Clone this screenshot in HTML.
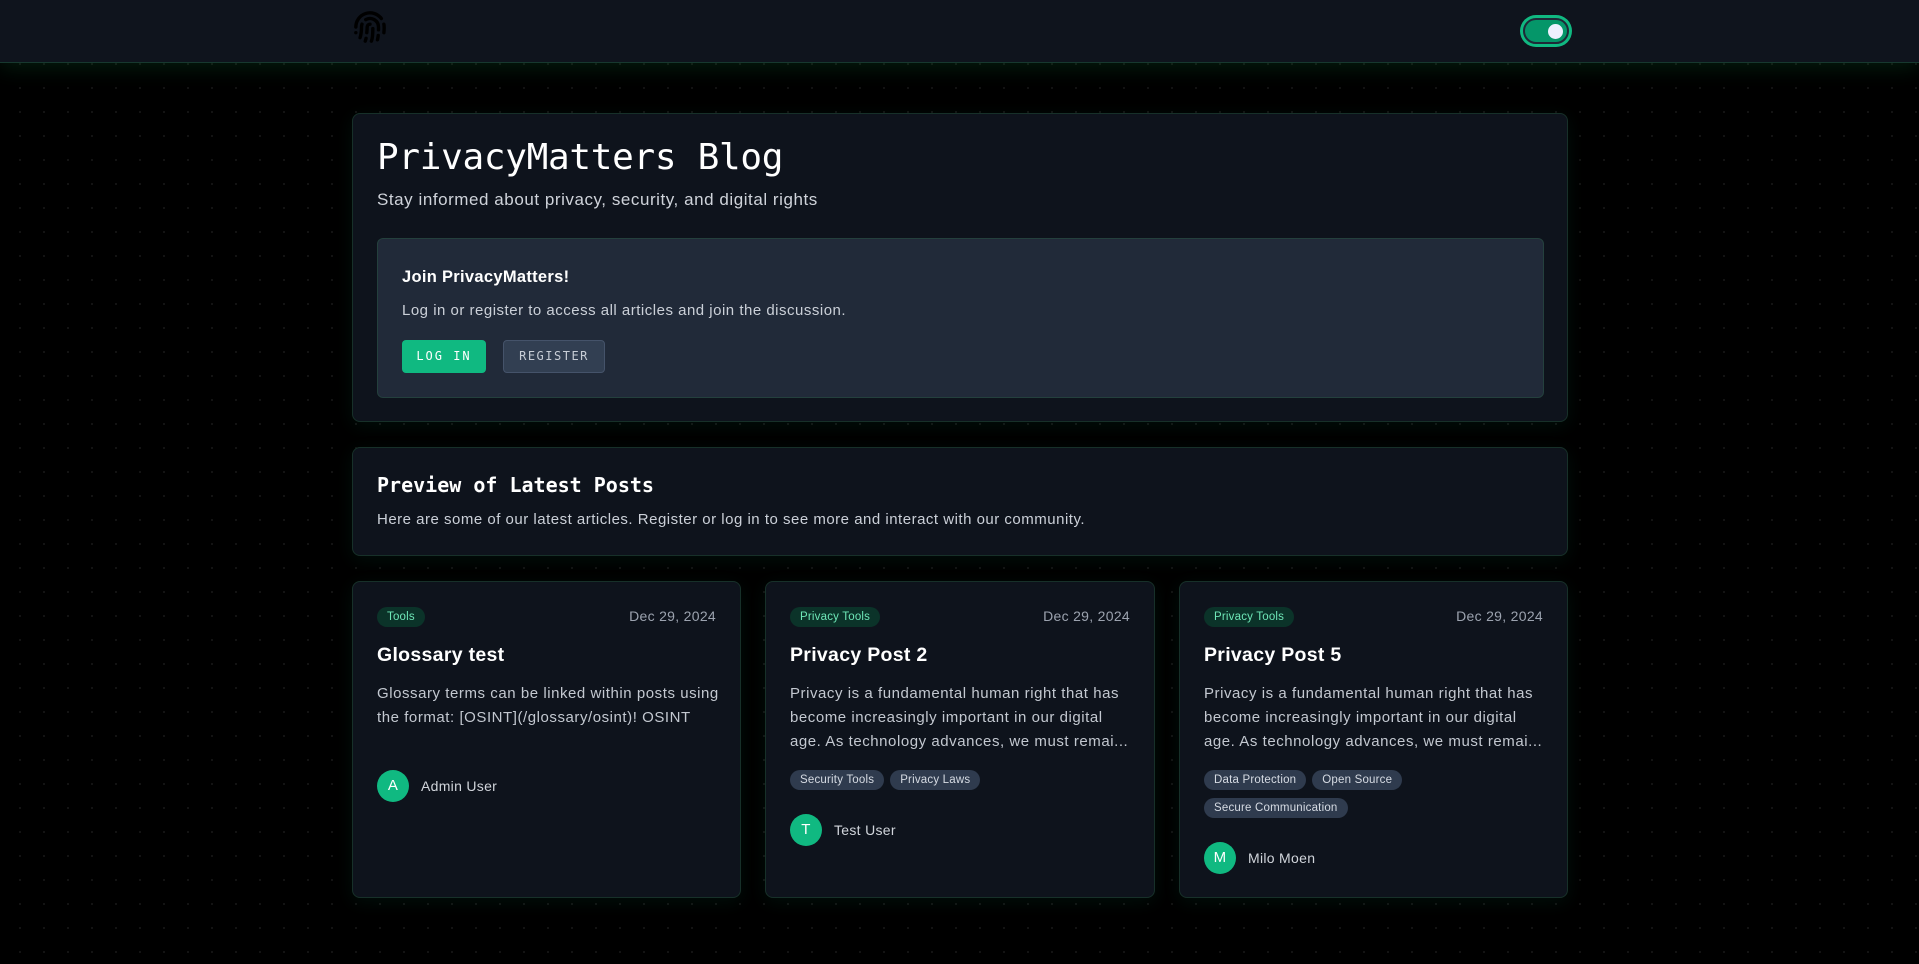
<!DOCTYPE html>
<html><head><meta charset="utf-8"><style>
*{box-sizing:border-box;margin:0;padding:0}
html,body{width:1919px;height:964px;overflow:hidden}
body{background:#000;background-image:radial-gradient(circle,#141414 1px,transparent 1.3px);background-size:24px 24px;background-position:8px 4px;font-family:"Liberation Sans",sans-serif;color:#e5e7eb;position:relative;letter-spacing:.3px}
.hdr{position:absolute;left:0;top:0;width:1919px;height:63px;background:#0f141d;border-bottom:1px solid #17382f;box-shadow:0 4px 20px rgba(16,120,60,.25)}
.mono{font-family:"DejaVu Sans Mono","Liberation Mono",monospace;letter-spacing:0}
.card{position:absolute;background:#0e131c;border:1px solid #173029;border-radius:8px;box-shadow:0 4px 18px rgba(16,185,129,.08)}
.btn{position:absolute;top:101px;height:33px;border-radius:4px;font-size:12px;letter-spacing:2px;line-height:33px;text-align:center}
.tag{display:inline-block;height:20px;line-height:20px;padding:0 10px;border-radius:10px;font-size:11.5px;letter-spacing:.2px}
.cat{background:#0b3329;color:#6ee7b7}
.t2{background:#2f3b4e;color:#d6dbe3;margin-right:6px}
.date{position:absolute;right:24px;top:26px;font-size:14px;color:#9ca3af}
.ttl{position:absolute;left:24px;top:62px;font-size:19.5px;font-weight:bold;color:#fff}
.desc{position:absolute;left:24px;top:100px;width:343px;font-size:15px;line-height:24px;color:#c3c8d0;letter-spacing:.55px}
.av{position:absolute;left:24px;width:32px;height:32px;border-radius:50%;background:#10b981;color:#fff;text-align:center;line-height:32px;font-size:15px}
.au{position:absolute;left:68px;font-size:14px;color:#d1d5db}
</style></head><body>
<div class="hdr">
<svg style="position:absolute;left:353px;top:8px" width="34" height="38" viewBox="0 0 24 24" fill="none" stroke="#000" stroke-width="2.4" stroke-linecap="round"><path d="M12 10a2 2 0 0 0-2 2c0 1.02-.1 2.51-.26 4"/><path d="M14 13.12c0 2.38 0 6.38-1 8.88"/><path d="M17.29 21.02c.12-.6.43-2.3.5-3.02"/><path d="M2 12a10 10 0 0 1 18-6"/><path d="M2 16h.01"/><path d="M21.8 16c.2-2 .131-5.354 0-6"/><path d="M5 19.5C5.5 18 6 15 6 12a6 6 0 0 1 .34-2"/><path d="M8.65 22c.21-.66.45-1.32.57-2"/><path d="M9 6.8a6 6 0 0 1 9 5.2v2"/></svg>
<div style="position:absolute;left:1520px;top:15px;width:52px;height:32px;border-radius:16px;background:#10b981;padding:3px"><div style="width:46px;height:26px;border-radius:13px;background:#059669;border:2px solid #1f2937;position:relative"><div style="position:absolute;right:4px;top:4px;width:15px;height:15px;border-radius:50%;background:#eef0ff"></div></div></div>
</div>

<div class="card" style="left:352px;top:113px;width:1216px;height:309px">
<div class="mono" style="position:absolute;left:24px;top:23px;font-size:36px;color:#fff;letter-spacing:-.3px">PrivacyMatters Blog</div>
<div style="position:absolute;left:24px;top:76px;font-size:17px;color:#cfd3da;letter-spacing:.55px">Stay informed about privacy, security, and digital rights</div>
<div style="position:absolute;left:24px;top:124px;width:1167px;height:160px;background:#212a39;border:1px solid #24403d;border-radius:6px">
<div style="position:absolute;left:24px;top:29px;font-size:16.5px;font-weight:bold;color:#fff">Join PrivacyMatters!</div>
<div style="position:absolute;left:24px;top:63px;font-size:15px;color:#cbd0d8;letter-spacing:.5px">Log in or register to access all articles and join the discussion.</div>
<div class="btn mono" style="left:24px;width:84px;background:#10b981;color:#fff;letter-spacing:2px">LOG IN</div>
<div class="btn mono" style="left:125px;width:102px;background:#323f52;border:1px solid #45536a;color:#c7cdd6;line-height:31px;letter-spacing:1.5px">REGISTER</div>
</div></div>

<div class="card" style="left:352px;top:447px;width:1216px;height:109px">
<div class="mono" style="position:absolute;left:24px;top:25px;font-size:20px;font-weight:bold;color:#fff">Preview of Latest Posts</div>
<div style="position:absolute;left:24px;top:63px;font-size:15px;color:#cbd0d8;letter-spacing:.5px">Here are some of our latest articles. Register or log in to see more and interact with our community.</div>
</div>

<div class="card" style="left:352px;top:581px;width:389px;height:317px">
<div style="position:absolute;left:24px;top:25px"><span class="tag cat">Tools</span></div>
<div class="date">Dec 29, 2024</div>
<div class="ttl">Glossary test</div>
<div class="desc">Glossary terms can be linked within posts using the format: [OSINT](/glossary/osint)! OSINT</div>
<div class="av" style="top:188px">A</div><div class="au" style="top:196px">Admin User</div>
</div>

<div class="card" style="left:765px;top:581px;width:390px;height:317px">
<div style="position:absolute;left:24px;top:25px"><span class="tag cat">Privacy Tools</span></div>
<div class="date">Dec 29, 2024</div>
<div class="ttl">Privacy Post 2</div>
<div class="desc">Privacy is a fundamental human right that has become increasingly important in our digital age. As technology advances, we must remai...</div>
<div style="position:absolute;left:24px;top:188px"><span class="tag t2">Security Tools</span><span class="tag t2">Privacy Laws</span></div>
<div class="av" style="top:232px">T</div><div class="au" style="top:240px">Test User</div>
</div>

<div class="card" style="left:1179px;top:581px;width:389px;height:317px">
<div style="position:absolute;left:24px;top:25px"><span class="tag cat">Privacy Tools</span></div>
<div class="date">Dec 29, 2024</div>
<div class="ttl">Privacy Post 5</div>
<div class="desc">Privacy is a fundamental human right that has become increasingly important in our digital age. As technology advances, we must remai...</div>
<div style="position:absolute;left:24px;top:188px;width:345px"><span class="tag t2">Data Protection</span><span class="tag t2">Open Source</span><br><span class="tag t2" style="margin-top:8px">Secure Communication</span></div>
<div class="av" style="top:260px">M</div><div class="au" style="top:268px">Milo Moen</div>
</div>
</body></html>
